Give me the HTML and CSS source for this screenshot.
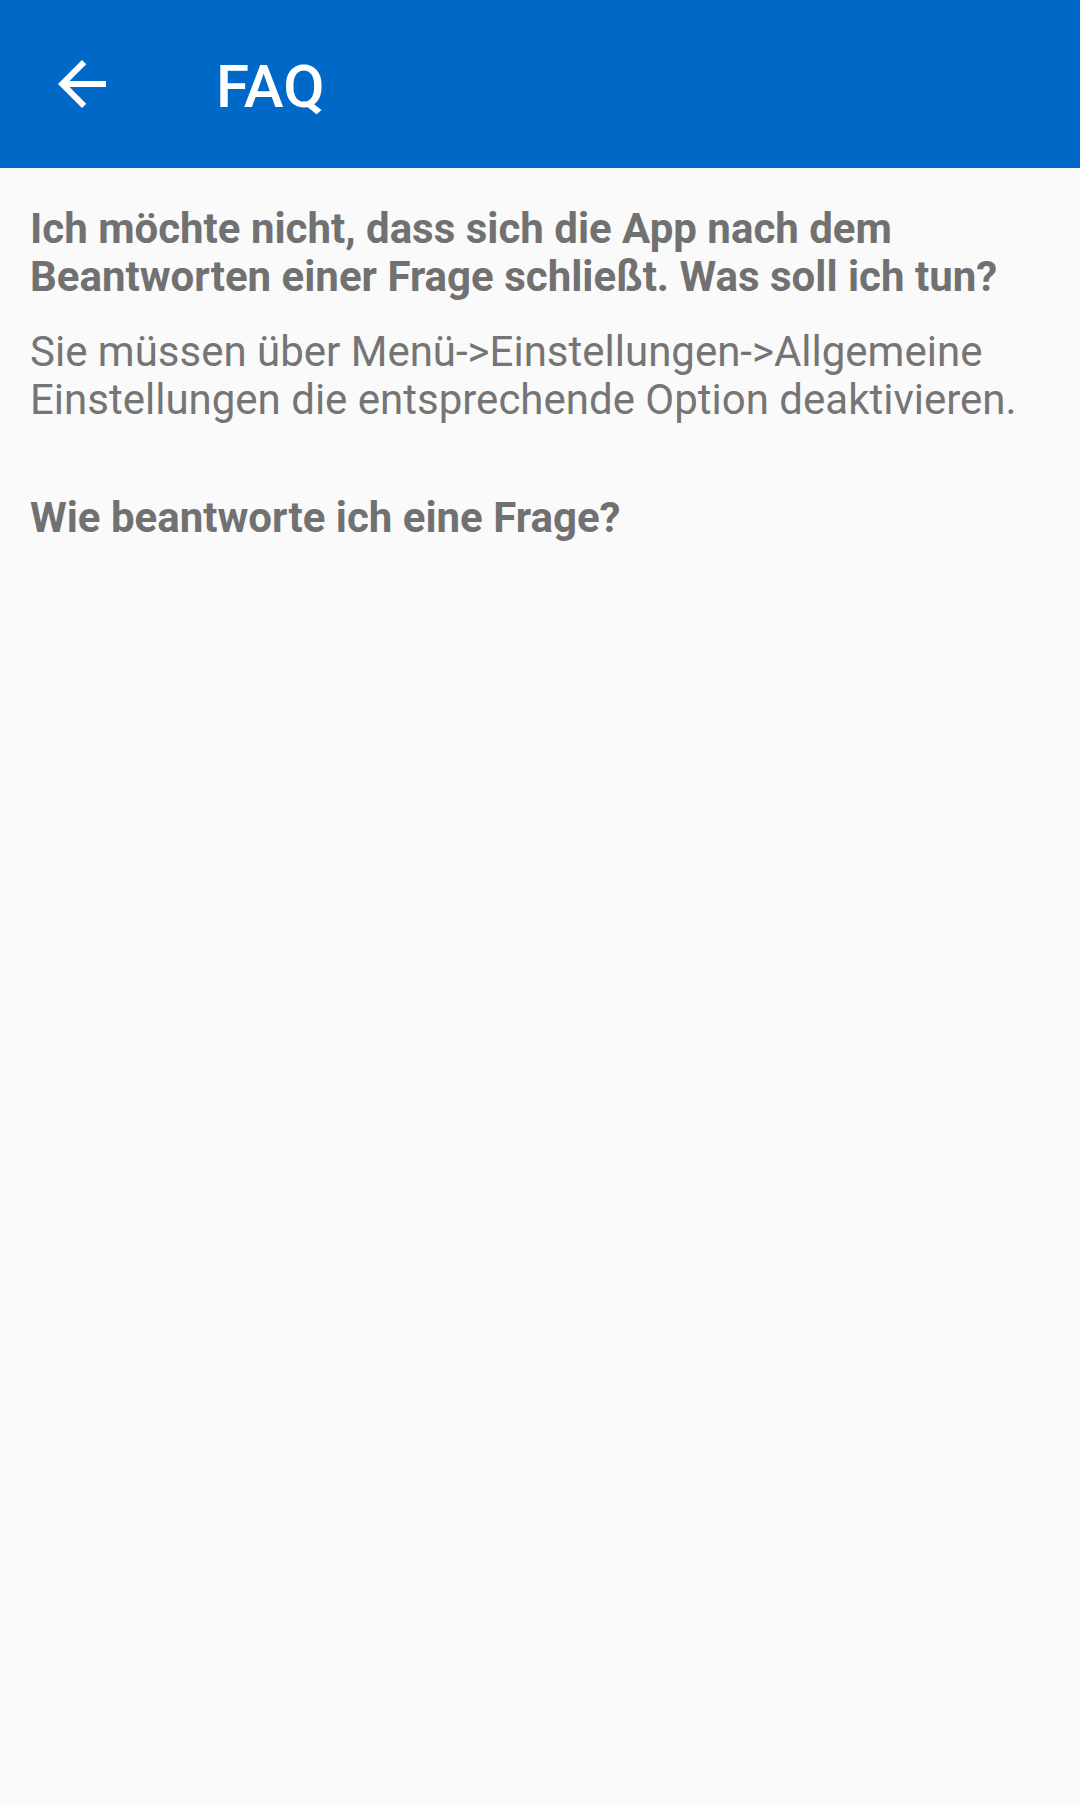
FILE: index.html
```html
<!DOCTYPE html>
<html lang="de">
<head>
<meta charset="utf-8">
<link rel="stylesheet" href="styles.css">
</head>
<body>
<header class="appbar">
  <div class="back">
    <svg viewBox="0 0 24 24" width="72" height="72"><path fill="#fff" d="M20 11H7.83l5.59-5.59L12 4l-8 8 8 8 1.41-1.41L7.83 13H20v-2z"/></svg>
  </div>
  <h1 class="title">FAQ</h1>
</header>
<main class="content">
  <section class="faq">
    <h2 class="question">Ich möchte nicht, dass sich die App nach dem Beantworten einer Frage schließt. Was soll ich tun?</h2>
    <p class="answer">Sie müssen über Menü-&gt;Einstellungen-&gt;Allgemeine Einstellungen die entsprechende Option deaktivieren.</p>
  </section>
  <section class="faq">
    <h2 class="question">Wie beantworte ich eine Frage?</h2>
  </section>
</main>
</body>
</html>
```
FILE: styles.css
```css
html, body {
  margin: 0;
  padding: 0;
}
body {
  width: 1080px;
  height: 1805px;
  background: #fafafa;
  font-family: Roboto, "Noto Sans", sans-serif;
  overflow: hidden;
}
.appbar {
  height: 168px;
  background: #0069c8;
  display: flex;
  align-items: center;
  padding-left: 46px;
  box-sizing: border-box;
}
.back {
  width: 72px;
  height: 72px;
  display: flex;
}
.title {
  margin: 0 0 0 98px;
  padding-top: 6px;
  color: #fff;
  font-size: 60px;
  font-weight: 500;
  line-height: 60px;
}
.content {
  padding: 37px 30px 0 30px;
  color: #757575;
}
.faq + .faq {
  margin-top: 70px;
}
.question {
  margin: 0;
  font-size: 42px;
  font-weight: 700;
  line-height: 48px;
  color: #717171;
}
.answer {
  margin: 27px 0 0 0;
  font-size: 42px;
  font-weight: 400;
  line-height: 48px;
  color: #757575;
}
```
